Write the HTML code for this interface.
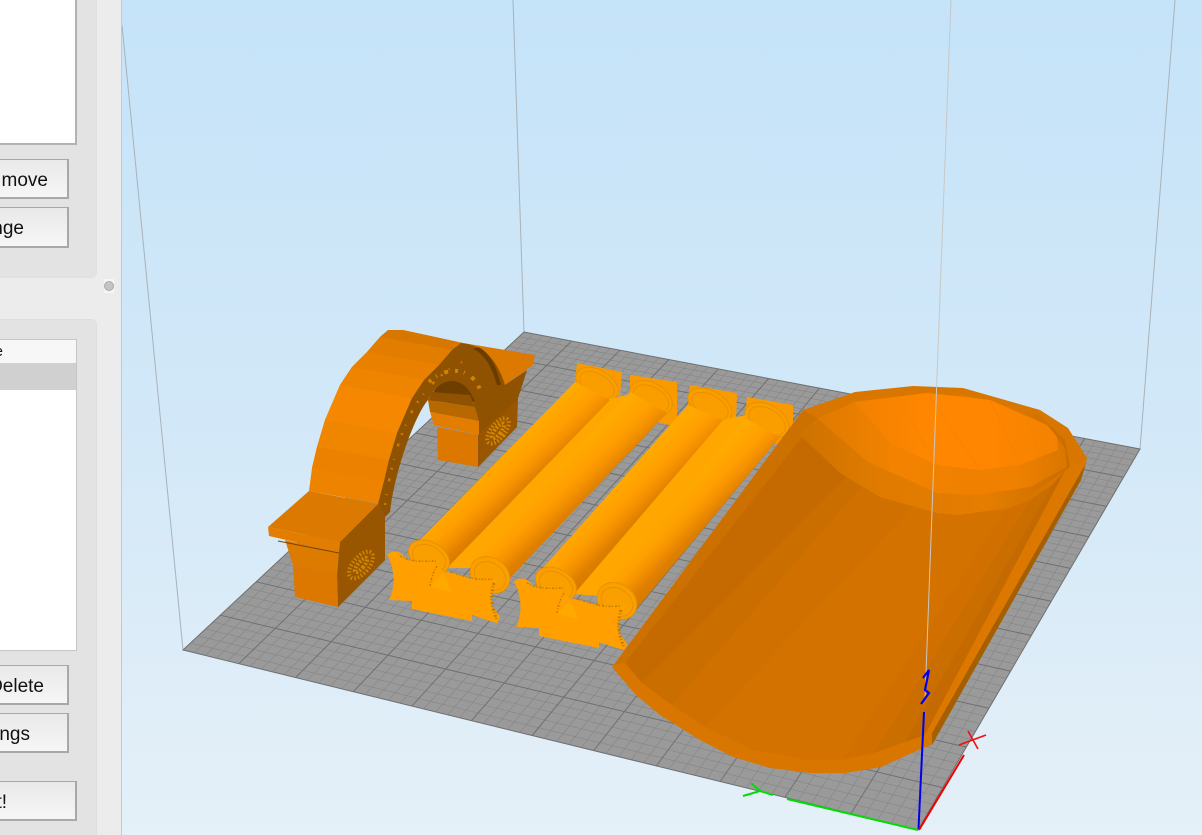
<!DOCTYPE html>
<html><head><meta charset="utf-8"><style>
html,body{margin:0;padding:0;width:1202px;height:835px;overflow:hidden;background:#ececec}
body{position:relative;font-family:"Liberation Sans",sans-serif;color:#111}
div{position:absolute;box-sizing:border-box}
.btn{background:linear-gradient(#e9e9e9,#f6f6f6);border:1px solid #a8a8a8;border-bottom:2px solid #a8a8a8;border-right:2px solid #a8a8a8;font-size:19px;line-height:41px;text-align:right;white-space:nowrap;overflow:hidden}
svg{position:absolute;left:122px;top:0}
</style></head><body>
<div style="left:0;top:0;width:122px;height:835px;background:#ececec;border-right:1px solid #c8c8c8"></div>
<div style="left:-10px;top:-10px;width:107px;height:288px;background:#e3e3e3;border-radius:6px;border:1px solid #e0e0e0"></div>
<div style="left:-10px;top:319px;width:107px;height:530px;background:#e3e3e3;border-radius:6px;border:1px solid #dedede"></div>
<div style="left:-5px;top:-5px;width:82px;height:150px;background:#fff;border:2px solid #b2b2b2;border-left:0;border-top:0"></div>
<div class="btn" style="left:-40px;top:159px;width:109px;height:40px;padding-right:19px">move</div>
<div class="btn" style="left:-60px;top:207px;width:129px;height:41px;padding-right:43px">Arrange</div>
<div style="left:104px;top:279px;width:10px;height:14px;background:#f5f5f5"></div>
<div style="left:104px;top:281px;width:10px;height:10px;border-radius:5px;background:#c4c4c4;border:1px solid #aaa"></div>
<div style="left:-5px;top:339px;width:82px;height:312px;background:#fff;border:1px solid #c6c6c6;border-left:0"></div>
<div style="left:-5px;top:340px;width:81px;height:23px;background:#f7f7f7"></div>
<div style="left:-60px;top:340px;width:63px;height:23px;font-size:15px;line-height:23px;text-align:right;white-space:nowrap">Name</div>
<div style="left:-5px;top:363px;width:81px;height:27px;background:#d0d0d0"></div>
<div class="btn" style="left:-40px;top:665px;width:109px;height:40px;padding-right:23px">Delete</div>
<div class="btn" style="left:-70px;top:713px;width:139px;height:40px;padding-right:37px">Settings</div>
<div class="btn" style="left:-70px;top:781px;width:147px;height:40px;padding-right:68px">Start!</div>

<svg width="1080" height="835" viewBox="122 0 1080 835" xmlns="http://www.w3.org/2000/svg">
<defs>
<linearGradient id="sky" x1="0" y1="0" x2="0" y2="1"><stop offset="0" stop-color="#c5e3f9"/><stop offset=".5" stop-color="#d2e8f8"/><stop offset="1" stop-color="#e5f0f8"/></linearGradient>
<linearGradient id="sh" x1="0" y1="0" x2="1" y2="1"><stop offset=".42" stop-color="#ffaa00"/><stop offset=".49" stop-color="#ffa000"/><stop offset=".53" stop-color="#f59200"/><stop offset=".57" stop-color="#e08000"/><stop offset=".6" stop-color="#d87b00"/></linearGradient>
<linearGradient id="d3"><stop offset="0" stop-color="#cf7200"/><stop offset=".3" stop-color="#e07b00"/><stop offset=".7" stop-color="#e47d00"/><stop offset="1" stop-color="#c86c00"/></linearGradient>
<linearGradient id="d2"><stop offset="0" stop-color="#df7a00"/><stop offset=".3" stop-color="#f28200"/><stop offset=".8" stop-color="#ef8000"/><stop offset="1" stop-color="#d87600"/></linearGradient>
<linearGradient id="d1"><stop offset="0" stop-color="#f28000"/><stop offset=".35" stop-color="#ff8700"/><stop offset=".65" stop-color="#ff8600"/><stop offset="1" stop-color="#f48200"/></linearGradient>
<g id="capg">
<path d="M387,555C392,550 400,550 405,558C415,563 425,563 434,562L443,572C452,572 458,575 467,577C475,582 490,582 500,577C494,585 490,595 492,607C496,612 500,615 500,618L497,623 490,621 472,615 472,621 412,609 412,601 389,600C394,590 394,580 393,573C392,565 390,560 387,555z" fill="#ffa000"/>
<polygon points="430,587 443,573 452,592" fill="#ffa800"/>
<g fill="none" stroke="#c27c00" stroke-width="1.5" stroke-dasharray="2 1.5 1 2">
<path d="M400,556C412,563 425,561 436,561"/>
<path d="M437,566C432,574 431,580 430,587"/>
<path d="M450,572C462,575 472,581 494,579"/>
<path d="M494,583C490,595 491,606 497,620" stroke-width="3"/>
</g>
</g>
</defs>
<rect x="122" y="0" width="1080" height="835" fill="url(#sky)"/>
<g fill="none" stroke="#a9b2b8" stroke-width="1">
<path d="M122 25L183 650M513 0L524 332M1175 0L1140 449"/>
</g>
<polygon points="183,650 524,332 1140,449 918,830" fill="#9a9a9a" stroke="#6e6e6e" stroke-width="1"/>
<g id="grid" fill="none"></g>

<!-- ARCH -->
<polygon points="309,491 312,468 317,447 325,420 340,385 352,367 367,352 380,337 388,330 403,330 463,343 439,365 424,380 412,398 397,433 389,460 384,481 381,504" fill="#ee8300"/>
<polygon points="312,468 384,481 389,460 317,447" fill="#ec8100"/>
<polygon points="317,447 389,460 397,433 325,420" fill="#f08500"/>
<polygon points="325,420 397,433 412,398 340,385" fill="#f58800"/>
<polygon points="340,385 412,398 424,380 352,367" fill="#ef8400"/>
<polygon points="352,367 424,380 439,365 367,352" fill="#e98000"/>
<polygon points="367,352 439,365 452,350 380,337" fill="#e27d00"/>
<polygon points="380,337 452,350 463,343 403,330 388,330" fill="#d87700"/>
<polygon points="463,343 535,355 533,365 505,385" fill="#db7900"/>
<path d="M378,504L384,481 389,460 397,433 412,398 424,380 439,365 452,350 461,343C485,345 498,362 505,385L527,370 523,383 518,398 517,427 478,467 478,435 473,397C465,385 458,382 452,383C440,384 432,390 428,400C415,415 395,470 390,512L385,517z" fill="#8f5200"/>
<path d="M478,347C490,352 497,368 501,385L497,385C492,368 486,355 473,349z" fill="#6b3c00"/>
<path d="M428,401C436,384 445,381 453,381C462,382 470,388 475,402z" fill="#6e3e00"/>
<polygon points="428,400 432,392 470,395 475,407" fill="#8f5200"/>
<polygon points="428,400 475,407 479,421 430,412" fill="#b86800"/>
<polygon points="430,412 479,421 479,435 434,425" fill="#e37d00"/>
<polygon points="437,427 478,435 478,467 438,460" fill="#dc7800"/>
<polygon points="478,435 517,400 517,427 478,467" fill="#985600"/>
<path d="M385,505C390,470 398,440 410,415C420,395 440,372 462,362" fill="none" stroke="#c97c00" stroke-width="2.5" stroke-dasharray="2 8 1 13 3 9"/>
<path d="M429,382C442,369 470,362 481,392" fill="none" stroke="#d08400" stroke-width="4" stroke-dasharray="3 6 1 8 4 7"/>
<g fill="none" stroke="#d38700" transform="rotate(38 498 431)">
<ellipse cx="498" cy="431" rx="7" ry="15" stroke-width="4" stroke-dasharray="1.5 2"/>
<ellipse cx="498" cy="431" rx="3" ry="9" stroke-width="4" stroke-dasharray="2 1.5"/>
</g>

<polygon points="340,542 378,504 385,517 385,560 338,607 337,575 339,552" fill="#985600"/>
<polygon points="268,527 309,491 378,504 340,542" fill="#db7900"/>
<polygon points="268,527 340,542 339,552 269,536" fill="#e27d00"/>
<polygon points="285,540 339,552 337,575 293,565" fill="#dd7a00"/>
<path d="M278,541L339,553" stroke="#7a4500" stroke-width="1"/>
<polygon points="293,565 337,575 338,607 295,597" fill="#dc7800"/>
<g fill="none" stroke="#d08500" transform="rotate(40 361 565)">
<ellipse cx="361" cy="565" rx="8" ry="16" stroke-width="4" stroke-dasharray="1.5 2"/>
<ellipse cx="361" cy="565" rx="3" ry="9" stroke-width="4" stroke-dasharray="2 1.5"/>
</g>

<!-- COLUMNS -->
<polygon points="577,363 622,372 620,395 610,400 575,382" fill="#f99a00"/>
<polygon points="630,375 677,382 677,427 660,423 630,392" fill="#f99a00"/>
<polygon points="690,385 737,393 736,420 723,420 688,405" fill="#f99a00"/>
<polygon points="747,397 793,405 793,433 778,445 745,418" fill="#f99a00"/>
<g fill="#fa9e00" stroke="#e89000" stroke-width="1">
<ellipse cx="597" cy="384" rx="23" ry="14" transform="rotate(30 597 384)"/>
<ellipse cx="597" cy="385" rx="19" ry="11" transform="rotate(30 597 385)"/>
<ellipse cx="651" cy="398" rx="23" ry="15" transform="rotate(30 651 398)"/>
<ellipse cx="651" cy="399" rx="19" ry="12" transform="rotate(30 651 399)"/>
<ellipse cx="710" cy="405" rx="24" ry="14" transform="rotate(30 710 405)"/>
<ellipse cx="710" cy="406" rx="20" ry="11" transform="rotate(30 710 406)"/>
<ellipse cx="767" cy="420" rx="24" ry="15" transform="rotate(30 767 420)"/>
<ellipse cx="767" cy="421" rx="20" ry="12" transform="rotate(30 767 421)"/>
</g>
<polygon points="606,400 630,394 472,568 444,568" fill="#ffa700"/>
<polygon points="720,420 748,415 600,596 572,594" fill="#ffa700"/>
<polygon points="575,382 610,400 448,567 410,550" fill="url(#sh)"/>
<polygon points="630,392 667,413 508,580 470,560" fill="url(#sh)"/>
<polygon points="688,405 723,420 575,593 535,577" fill="url(#sh)"/>
<polygon points="745,418 780,437 638,607 597,595" fill="url(#sh)"/>
<g fill="#fa9f00" stroke="#e89000" stroke-width="1">
<ellipse cx="429" cy="557" rx="22" ry="15" transform="rotate(30 429 557)"/>
<ellipse cx="429" cy="558" rx="18" ry="12" transform="rotate(30 429 558)"/>
<ellipse cx="490" cy="575" rx="21" ry="17" transform="rotate(35 490 575)"/>
<ellipse cx="490" cy="576" rx="17" ry="13" transform="rotate(35 490 576)"/>
<ellipse cx="556" cy="584" rx="22" ry="15" transform="rotate(30 556 584)"/>
<ellipse cx="556" cy="585" rx="18" ry="12" transform="rotate(30 556 585)"/>
<ellipse cx="617" cy="601" rx="21" ry="17" transform="rotate(35 617 601)"/>
<ellipse cx="617" cy="602" rx="17" ry="13" transform="rotate(35 617 602)"/>
</g>
<use href="#capg"/>
<use href="#capg" transform="translate(127,27)"/>

<!-- DOME -->
<polygon points="612,667 803,410 855,392 913,386 963,388 1040,410 1068,428 1087,458 1086,463 932,733 932,745 923,748 881,767 846,773 810,773 770,768 733,757 700,740 660,715 636,695" fill="#d97600"/>
<polygon points="1086,463 1081,480 932,745 932,733" fill="#a55e00"/>
<polygon points="614,665 625,663 817,418 803,410" fill="#cc7000"/>
<polygon points="625,663 642,683 853,470 817,418" fill="#c46a00"/>
<polygon points="642,683 672,705 880,490 853,470" fill="#cb6e00"/>
<polygon points="672,705 705,727 915,505 867,480" fill="#d07000"/>
<polygon points="705,727 754,750 807,760 970,512 915,505" fill="#d47200"/>
<polygon points="807,760 842,760 1005,510 970,512" fill="#d47200"/>
<polygon points="842,760 874,753 1030,500 1005,510" fill="#d17000"/>
<polygon points="874,753 905,742 1052,485 1030,500" fill="#cb6e00"/>
<polygon points="905,742 925,735 1068,467 1052,485" fill="#c46a00"/>
<polygon points="925,735 932,733 1086,463 1068,465" fill="#dc7800"/>
<polygon points="800,435 840,473 880,497 937,513 960,515 1013,507 1070,467 1065,440 1040,415 963,395 855,400 817,418" fill="url(#d3)"/>
<polygon points="817,418 868,462 937,493 977,495 1030,487 1067,467 1065,448 1047,425 990,400 927,393 855,402" fill="url(#d2)"/>
<polygon points="855,402 890,443 937,465 980,470 1020,465 1058,450 1057,437 1047,425 990,400 927,393" fill="url(#d1)"/>
<path d="M855,402L890,443M897,397L937,465M927,393L980,470M990,400L1020,465M1025,415L1040,458" stroke="#f28000" stroke-width=".8" opacity=".7" fill="none"/>

<!-- axes -->
<path d="M951 0L925 700" stroke="#c8c8c4" stroke-width="1" fill="none"/>
<path d="M918.5 829L924 712" stroke="#0000ee" stroke-width="2" fill="none"/>
<path d="M923 678L929 670 925 690 929 693 921 704" stroke="#0000ee" stroke-width="2.2" fill="none"/>
<path d="M919 830L964 755" stroke="#f00000" stroke-width="2" fill="none"/>
<path d="M959 745L986 735M968 731L978 749" stroke="#ee1111" stroke-width="1.6" fill="none"/>
<path d="M918 830L787 799M773 795L760 791M743 796L760 791 751 783" stroke="#00dd00" stroke-width="2" fill="none"/>
</svg>
<script>
(function(){
var P=[[183,650],[524,332],[1140,449],[918,830]];
var x0=P[0][0],y0=P[0][1],x1=P[1][0],y1=P[1][1],x2=P[2][0],y2=P[2][1],x3=P[3][0],y3=P[3][1];
var dx1=x1-x2,dx2=x3-x2,sx=x0-x1+x2-x3,dy1=y1-y2,dy2=y3-y2,sy=y0-y1+y2-y3;
var den=dx1*dy2-dx2*dy1,g=(sx*dy2-dx2*sy)/den,h=(dx1*sy-sx*dy1)/den;
var a=x1-x0+g*x1,b=x3-x0+h*x3,d=y1-y0+g*y1,e=y3-y0+h*y3;
function m(u,v){var w=g*u+h*v+1;return ((a*u+b*v+x0)/w).toFixed(1)+' '+((d*u+e*v+y0)/w).toFixed(1);}
var nU=11,nV=12,k=5,mi='',ma='',i,t;
for(i=1;i<nU*k;i++){t=i/(nU*k);var s='M'+m(t,0)+'L'+m(t,1);if(i%k)mi+=s;else ma+=s;}
for(i=1;i<nV*k;i++){t=i/(nV*k);var s2='M'+m(0,t)+'L'+m(1,t);if(i%k)mi+=s2;else ma+=s2;}
document.getElementById('grid').innerHTML='<path d="'+mi+'" stroke="#858585" stroke-width=".6"/><path d="'+ma+'" stroke="#707070" stroke-width="1"/>';
})();
</script>
</body></html>
